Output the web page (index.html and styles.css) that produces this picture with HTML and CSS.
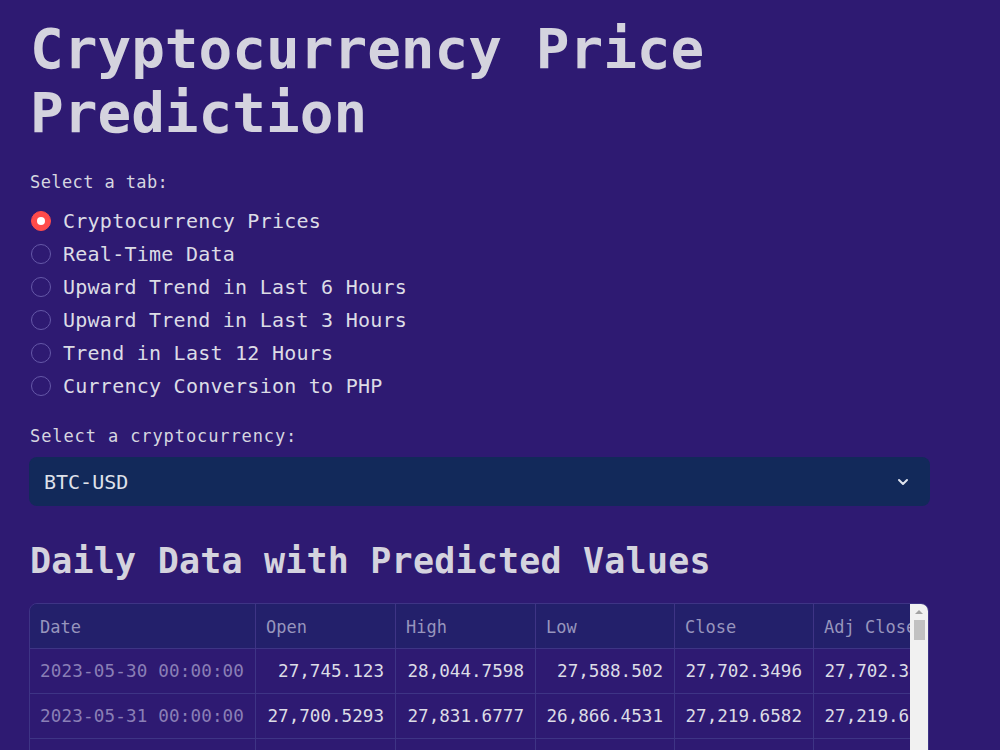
FILE: index.html
```html
<!DOCTYPE html>
<html lang="en">
<head>
    <meta charset="UTF-8">
    <meta name="viewport" content="width=device-width, initial-scale=1.0">
    <title>Cryptocurrency Price Prediction</title>
    <link rel="stylesheet" href="styles.css">
</head>
<body>
<main class="app">
    <h1 class="title">Cryptocurrency Price Prediction</h1>

    <div class="widget-label">Select a tab:</div>
    <div class="radio-group">
        <label class="radio checked"><span class="dot"></span>Cryptocurrency Prices</label>
        <label class="radio"><span class="dot"></span>Real-Time Data</label>
        <label class="radio"><span class="dot"></span>Upward Trend in Last 6 Hours</label>
        <label class="radio"><span class="dot"></span>Upward Trend in Last 3 Hours</label>
        <label class="radio"><span class="dot"></span>Trend in Last 12 Hours</label>
        <label class="radio"><span class="dot"></span>Currency Conversion to PHP</label>
    </div>

    <div class="widget-label second">Select a cryptocurrency:</div>
    <div class="select">
        <span>BTC-USD</span>
        <svg class="chevron" width="14" height="14" viewBox="0 0 14 14">
            <path d="M3 5 L7 9 L11 5" fill="none" stroke="#dfe3ee" stroke-width="2" stroke-linecap="round" stroke-linejoin="round"/>
        </svg>
    </div>

    <h2 class="subtitle">Daily Data with Predicted Values</h2>

    <div class="frame">
        <div class="grid-view">
            <div class="grid">
                <div class="cell head">Date</div>
                <div class="cell head">Open</div>
                <div class="cell head">High</div>
                <div class="cell head">Low</div>
                <div class="cell head">Close</div>
                <div class="cell head">Adj Close</div>

                <div class="cell date">2023-05-30 00:00:00</div>
                <div class="cell num">27,745.123</div>
                <div class="cell num">28,044.7598</div>
                <div class="cell num">27,588.502</div>
                <div class="cell num">27,702.3496</div>
                <div class="cell num">27,702.3496</div>

                <div class="cell date">2023-05-31 00:00:00</div>
                <div class="cell num">27,700.5293</div>
                <div class="cell num">27,831.6777</div>
                <div class="cell num">26,866.4531</div>
                <div class="cell num">27,219.6582</div>
                <div class="cell num">27,219.6582</div>

                <div class="cell date">2023-06-01 00:00:00</div>
                <div class="cell num">27,218.4121</div>
                <div class="cell num">27,346.1055</div>
                <div class="cell num">26,671.7227</div>
                <div class="cell num">26,819.9727</div>
                <div class="cell num">26,819.9727</div>
            </div>
        </div>
        <div class="scrollbar">
            <span class="arrow"></span>
            <span class="thumb"></span>
        </div>
    </div>
</main>
</body>
</html>
```

FILE: styles.css
```css
body {
    margin: 0;
    background-color: #2e1a72;
    color: #d3d3dd;
    font-family: "DejaVu Sans Mono", "Liberation Mono", monospace;
    overflow: hidden;
}
.app {
    width: 900px;
    padding: 17px 0 0 30px;
    display: flex;
    flex-direction: column;
}
.title {
    margin: 0;
    font-size: 56px;
    line-height: 64px;
    font-weight: bold;
    color: #d4d3de;
    width: 720px;
}
.widget-label {
    font-size: 17px;
    line-height: 22px;
    letter-spacing: 0.4px;
    margin-top: 26px;
    color: #d6d6e0;
}
.widget-label.second {
    margin-top: 23px;
    letter-spacing: 0.9px;
}
.radio-group {
    display: flex;
    flex-direction: column;
    margin-top: 11px;
}
.radio {
    display: flex;
    align-items: center;
    gap: 12px;
    height: 33px;
    font-size: 20px;
    letter-spacing: 0.25px;
    color: #dcdce6;
}
.radio .dot {
    width: 18px;
    height: 18px;
    border: 1px solid #6558a8;
    border-radius: 50%;
    margin-left: 1px;
    box-sizing: content-box;
}
.radio.checked .dot {
    background-color: #ff4b4b;
    border-color: #ff4b4b;
    display: flex;
    align-items: center;
    justify-content: center;
}
.radio.checked .dot:after {
    content: '';
    width: 8px;
    height: 8px;
    border-radius: 50%;
    background-color: #fff;
}
.select {
    margin-top: 10px;
    height: 49px;
    width: 901px;
    margin-left: -1px;
    box-sizing: border-box;
    background-color: #12295a;
    border-radius: 8px;
    display: flex;
    align-items: center;
    justify-content: space-between;
    padding: 0 20px 0 15px;
    font-size: 20px;
    color: #dfe1ea;
}
.subtitle {
    margin: 33px 0 0;
    font-size: 35px;
    line-height: 44px;
    font-weight: bold;
    letter-spacing: 0.2px;
    color: #d4d3de;
}
.frame {
    margin: 20px 0 0 -1px;
    width: 900px;
    height: 300px;
    display: flex;
    border: 1px solid #3e3485;
    border-radius: 8px;
    overflow: hidden;
    box-sizing: border-box;
}
.grid-view {
    flex: 1;
    overflow: hidden;
}
.grid {
    display: grid;
    grid-template-columns: 226px 140px 140px 139px 139px 139px;
    grid-auto-rows: 45px;
}
.cell {
    display: flex;
    align-items: center;
    padding: 0 10px;
    font-size: 17.6px;
    white-space: nowrap;
    border-right: 1px solid #3e3485;
    border-bottom: 1px solid #3e3485;
}
.cell.head {
    background-color: #23206b;
    color: #9795bd;
    font-size: 17px;
    padding-top: 2px;
}
.cell.date {
    color: #8a7fb6;
    letter-spacing: 0.15px;
}
.cell.num {
    justify-content: flex-end;
    padding-right: 11px;
    color: #dcdce6;
}
.scrollbar {
    width: 18px;
    background-color: #f1f1f1;
    display: flex;
    flex-direction: column;
    align-items: center;
}
.scrollbar .arrow {
    margin-top: 6px;
    width: 0;
    height: 0;
    border-left: 4px solid transparent;
    border-right: 4px solid transparent;
    border-bottom: 4px solid #a3a3a3;
}
.scrollbar .thumb {
    margin-top: 6px;
    width: 11px;
    height: 20px;
    background-color: #c1c1c1;
}
```
